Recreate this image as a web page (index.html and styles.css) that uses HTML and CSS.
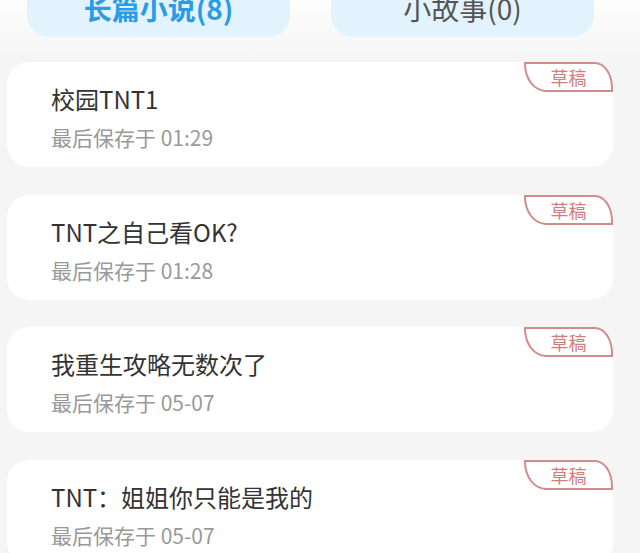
FILE: index.html
```html
<!DOCTYPE html>
<html lang="zh-CN">
<head>
    <meta charset="UTF-8">
    <meta name="viewport" content="width=device-width, initial-scale=1.0">
    <title>草稿箱</title>
    <link rel="stylesheet" href="styles.css">
</head>
<body>
    <div class="tabs">
        <div class="tab active">长篇小说(8)</div>
        <div class="tab">小故事(0)</div>
    </div>

    <div class="list">
        <div class="card">
            <div class="badge">草稿</div>
            <div class="card-title">校园TNT1</div>
            <div class="card-time">最后保存于 01:29</div>
        </div>
        <div class="card">
            <div class="badge">草稿</div>
            <div class="card-title">TNT之自己看OK?</div>
            <div class="card-time">最后保存于 01:28</div>
        </div>
        <div class="card">
            <div class="badge">草稿</div>
            <div class="card-title">我重生攻略无数次了</div>
            <div class="card-time">最后保存于 05-07</div>
        </div>
        <div class="card">
            <div class="badge">草稿</div>
            <div class="card-title">TNT：姐姐你只能是我的</div>
            <div class="card-time">最后保存于 05-07</div>
        </div>
    </div>
</body>
</html>
```

FILE: styles.css
```css
body {
    margin: 0;
    background: linear-gradient(#fdfdfd 0, #f5f5f5 60px) no-repeat, #f5f5f5;
    font-family: "Noto Sans CJK SC", "Noto Sans", sans-serif;
    overflow: hidden;
}

.tabs {
    display: flex;
    gap: 41px;
    margin-top: -27px;
    padding-left: 27px;
}

.tab {
    display: flex;
    width: 263px;
    height: 64px;
    padding-top: 6px;
    box-sizing: border-box;
    justify-content: center;
    align-items: center;
    background-color: #e2f3fd;
    border-radius: 22px;
    font-size: 28px;
    color: #555;
}

.tab.active {
    color: #2a9be5;
    font-weight: bold;
}

.list {
    display: flex;
    flex-direction: column;
    gap: 27.5px;
    margin-top: 25px;
    padding-left: 7px;
}

.card {
    position: relative;
    width: 606px;
    height: 105px;
    box-sizing: border-box;
    padding: 20px 0 0 44px;
    background-color: #fff;
    border-radius: 22px;
}

.card-title {
    font-size: 24px;
    line-height: 34px;
    color: #333;
}

.card-time {
    margin-top: 7px;
    font-size: 21px;
    line-height: 29px;
    color: #999;
}

.badge {
    position: absolute;
    top: 0;
    right: 0;
    width: 89px;
    height: 30px;
    box-sizing: border-box;
    border: 2px solid #d28b8b;
    border-radius: 0 18px 0 22px / 0 26px 0 28px;
    display: flex;
    justify-content: center;
    align-items: center;
    font-size: 18px;
    color: #cf7e7e;
    background-color: #fff;
}
```
